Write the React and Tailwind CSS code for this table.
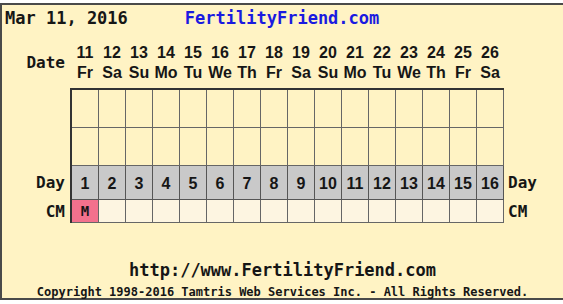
const dates = [
  [11, 'Fr'], [12, 'Sa'], [13, 'Su'], [14, 'Mo'], [15, 'Tu'], [16, 'We'], [17, 'Th'], [18, 'Fr'],
  [19, 'Sa'], [20, 'Su'], [21, 'Mo'], [22, 'Tu'], [23, 'We'], [24, 'Th'], [25, 'Fr'], [26, 'Sa'],
]

const mono = "font-['DejaVu_Sans_Mono',monospace] font-bold"
const sans = "font-['Liberation_Sans',Arial,sans-serif] font-bold"

function Label({ children }) {
  return (
    <div className={`w-[68px] flex items-center justify-end pr-[5px] text-[16px] ${mono}`}>{children}</div>
  )
}

function RightLabel({ children }) {
  return <div className={`flex items-center pl-[4px] text-[16px] ${mono}`}>{children}</div>
}

export default function App() {
  return (
    <div className="w-[563px] h-[304px] bg-white overflow-hidden text-[#161616]">
      <div className="mt-[3px] h-[297px] w-[563px] bg-[#fff3c4] border-l-2 border-t-2 border-b-2 border-[#4a4a4a] flex flex-col">
        <div className={`h-[28px] flex items-center text-[17px] ${mono}`}>
          <span className="ml-[3px]">Mar 11, 2016</span>
          <span className="ml-[57px] text-[#1a1ae0]">FertilityFriend.com</span>
        </div>

        <div className="mt-[11px] flex h-[40px]">
          <Label>Date</Label>
          <div className="flex pl-[2px]">
            {dates.map(([n, d]) => (
              <div key={n} className={`w-[27px] pr-[1px] flex flex-col items-center text-[16px] leading-[20px] ${sans}`}>
                <span>{n}</span>
                <span>{d}</span>
              </div>
            ))}
          </div>
        </div>

        <div className="mt-[5px] flex flex-col">
          <div className="flex h-[40px]">
            <Label />
            <div className="flex border-l-2 border-t-2 border-[#333]">
              {dates.map(([n]) => (
                <div key={n} className="w-[27px] h-[38px] border-r border-b border-[#666]" />
              ))}
            </div>
          </div>
          <div className="flex h-[38px]">
            <Label />
            <div className="flex border-l-2 border-[#333]">
              {dates.map(([n]) => (
                <div key={n} className="w-[27px] h-[38px] border-r border-b border-[#666]" />
              ))}
            </div>
          </div>
          <div className="flex h-[34px]">
            <Label>Day</Label>
            <div className="flex border-l-2 border-[#333]">
              {dates.map((_, i) => (
                <div key={i} className={`w-[27px] h-[34px] pt-[2px] border-r border-b border-[#555] bg-[#c9c9c9] flex items-center justify-center text-[16px] ${sans}`}>
                  {i + 1}
                </div>
              ))}
            </div>
            <RightLabel>Day</RightLabel>
          </div>
          <div className="flex h-[23px]">
            <Label>CM</Label>
            <div className="flex border-l-2 border-[#333]">
              {dates.map((_, i) => (
                <div key={i} className={`w-[27px] h-[23px] pt-[1px] border-r border-b border-[#666] flex items-center justify-center text-[14px] ${mono} ${i === 0 ? 'bg-[#f3718d]' : 'bg-[#fdf5e1]'}`}>
                  {i === 0 ? 'M' : ''}
                </div>
              ))}
            </div>
            <RightLabel>CM</RightLabel>
          </div>
        </div>

        <div className={`mt-[36px] text-center text-[17px] leading-[22px] ${mono}`}>http://www.FertilityFriend.com</div>
        <div className={`mt-[5px] text-center text-[12px] leading-[12px] ${mono}`}>
          Copyright 1998-2016 Tamtris Web Services Inc. - All Rights Reserved.
        </div>
      </div>
    </div>
  )
}
